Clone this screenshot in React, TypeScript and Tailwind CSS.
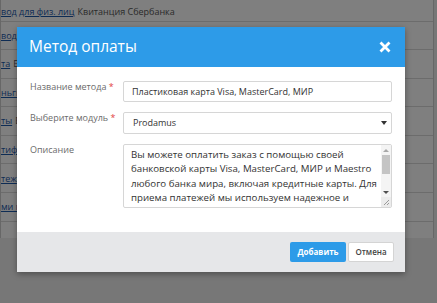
const rows = [
  { link: "вод для физ. лиц", rest: "Квитанция Сбербанка" },
  { link: "вод", rest: "" },
  { link: "та", rest: "Е" },
  { link: "ньги", rest: "" },
  { link: "ты", rest: "Е" },
  { link: "тиф", rest: "" },
  { link: "теж", rest: "" },
  { link: "ми п", rest: "" },
];

const description =
  "Вы можете оплатить заказ с помощью своей банковской карты Visa, MasterCard, МИР и Maestro любого банка мира, включая кредитные карты. Для приема платежей мы используем надежное и безопасное платежное решение от Сбербанка России, которое гарантирует безопасность ваших данных.";

function FakeScrollbar() {
  return (
    <div className="pointer-events-none absolute right-px top-px bottom-px flex w-[10px] flex-col bg-[#f4f4f4]">
      <div className="flex h-[10px] items-center justify-center">
        <div className="h-0 w-0 border-x-[3px] border-b-[3px] border-x-transparent border-b-[#a8a8a8]" />
      </div>
      <div className="mx-[1px] h-[19px] bg-[#c4c4c4]" />
      <div className="flex-1" />
      <div className="flex h-[10px] items-center justify-center">
        <div className="h-0 w-0 border-x-[3px] border-t-[3px] border-x-transparent border-t-[#505050]" />
      </div>
      <div className="flex h-[10px] items-end justify-end bg-[#ececec] p-[1px]">
        <svg width="8" height="8" viewBox="0 0 8 8">
          <path d="M7 2 L2 7 M7 5 L5 7" stroke="#9a9a9a" strokeWidth="1" />
        </svg>
      </div>
    </div>
  );
}

export default function App() {
  return (
    <div
      className="relative h-[303px] w-[437px] overflow-hidden bg-[#efefef]"
      style={{ fontFamily: '"Open Sans", "Liberation Sans", sans-serif' }}
    >
      {/* PAGE BEHIND */}
      <div className="mt-[-7px] w-[434px] border-l border-r border-[#cfcfcf] bg-white">
        {rows.map((r, i) => (
          <div
            key={i}
            className={`flex items-center gap-[3px] border-b border-[#d8d8d8] text-[9px] whitespace-nowrap ${
              i === 0 ? "h-[28.5px] pt-[9px]" : "h-[28.6px]"
            }`}
          >
            <span className="text-[#1d58a8] underline">{r.link}</span>
            {r.rest && <span className="text-[#555]">{r.rest}</span>}
          </div>
        ))}
        <div className="h-[16px]" />
      </div>

      {/* OVERLAY */}
      <div className="absolute inset-0 bg-black/50" />

      {/* MODAL */}
      <div className="absolute left-[17px] top-[27px] w-[388px] bg-white shadow-[0_2px_6px_rgba(0,0,0,0.35)]">
        <div className="flex h-[40px] items-center justify-between bg-[#2d9be8] pl-[12px] pr-[14px]">
          <h1 className="text-[15.5px] leading-none text-white">Метод оплаты</h1>
          <svg width="12" height="12" viewBox="0 0 12 12">
            <path d="M1.5 1.5 L10.5 10.5 M10.5 1.5 L1.5 10.5" stroke="white" strokeWidth="2.8" />
          </svg>
        </div>

        <div className="flex flex-col gap-[10px] px-[13px] pt-[14px] pb-[24px] text-[9px]">
          <div className="flex items-start">
            <label className="-mt-px w-[93px] text-[#6b6b6b]">
              Название метода <span className="text-[#e2403e]">*</span>
            </label>
            <input
              defaultValue="Пластиковая карта Visa, MasterCard, МИР"
              className="h-[21px] flex-1 rounded-[2px] border border-[#d6d6d6] px-[8px] text-[9px] text-[#333] outline-none"
            />
          </div>

          <div className="flex items-start">
            <label className="-mt-px w-[93px] text-[#6b6b6b]">
              Выберите модуль <span className="text-[#e2403e]">*</span>
            </label>
            <div className="relative flex-1">
              <select className="h-[22px] w-full appearance-none rounded-[2px] border border-[#d6d6d6] bg-white px-[9px] text-[9px] text-[#333] outline-none">
                <option>Prodamus</option>
              </select>
              <div className="pointer-events-none absolute right-[5px] top-[9px] h-0 w-0 border-x-[3px] border-t-[4px] border-x-transparent border-t-[#333]" />
            </div>
          </div>

          <div className="flex items-start">
            <label className="-mt-px w-[93px] text-[#6b6b6b]">Описание</label>
            <div className="relative h-[64px] flex-1">
              <textarea
                defaultValue={description}
                className="h-full w-full resize-none overflow-hidden rounded-[2px] border border-[#d6d6d6] pl-[7px] pr-[11px] pt-[3px] text-[9.7px] leading-[14.3px] text-[#333] outline-none"
              />
              <FakeScrollbar />
            </div>
          </div>
        </div>

        <div className="flex h-[40px] items-center justify-end gap-[2px] bg-[#e6e7e9] pr-[11px]">
          <button className="h-[20px] w-[56px] rounded-[2px] bg-[#2d9be8] text-[8px] font-bold text-white">
            Добавить
          </button>
          <button className="h-[20px] w-[46px] rounded-[2px] border border-[#d4d4d4] bg-white text-[8px] font-semibold text-[#444]">
            Отмена
          </button>
        </div>
      </div>
    </div>
  );
}
